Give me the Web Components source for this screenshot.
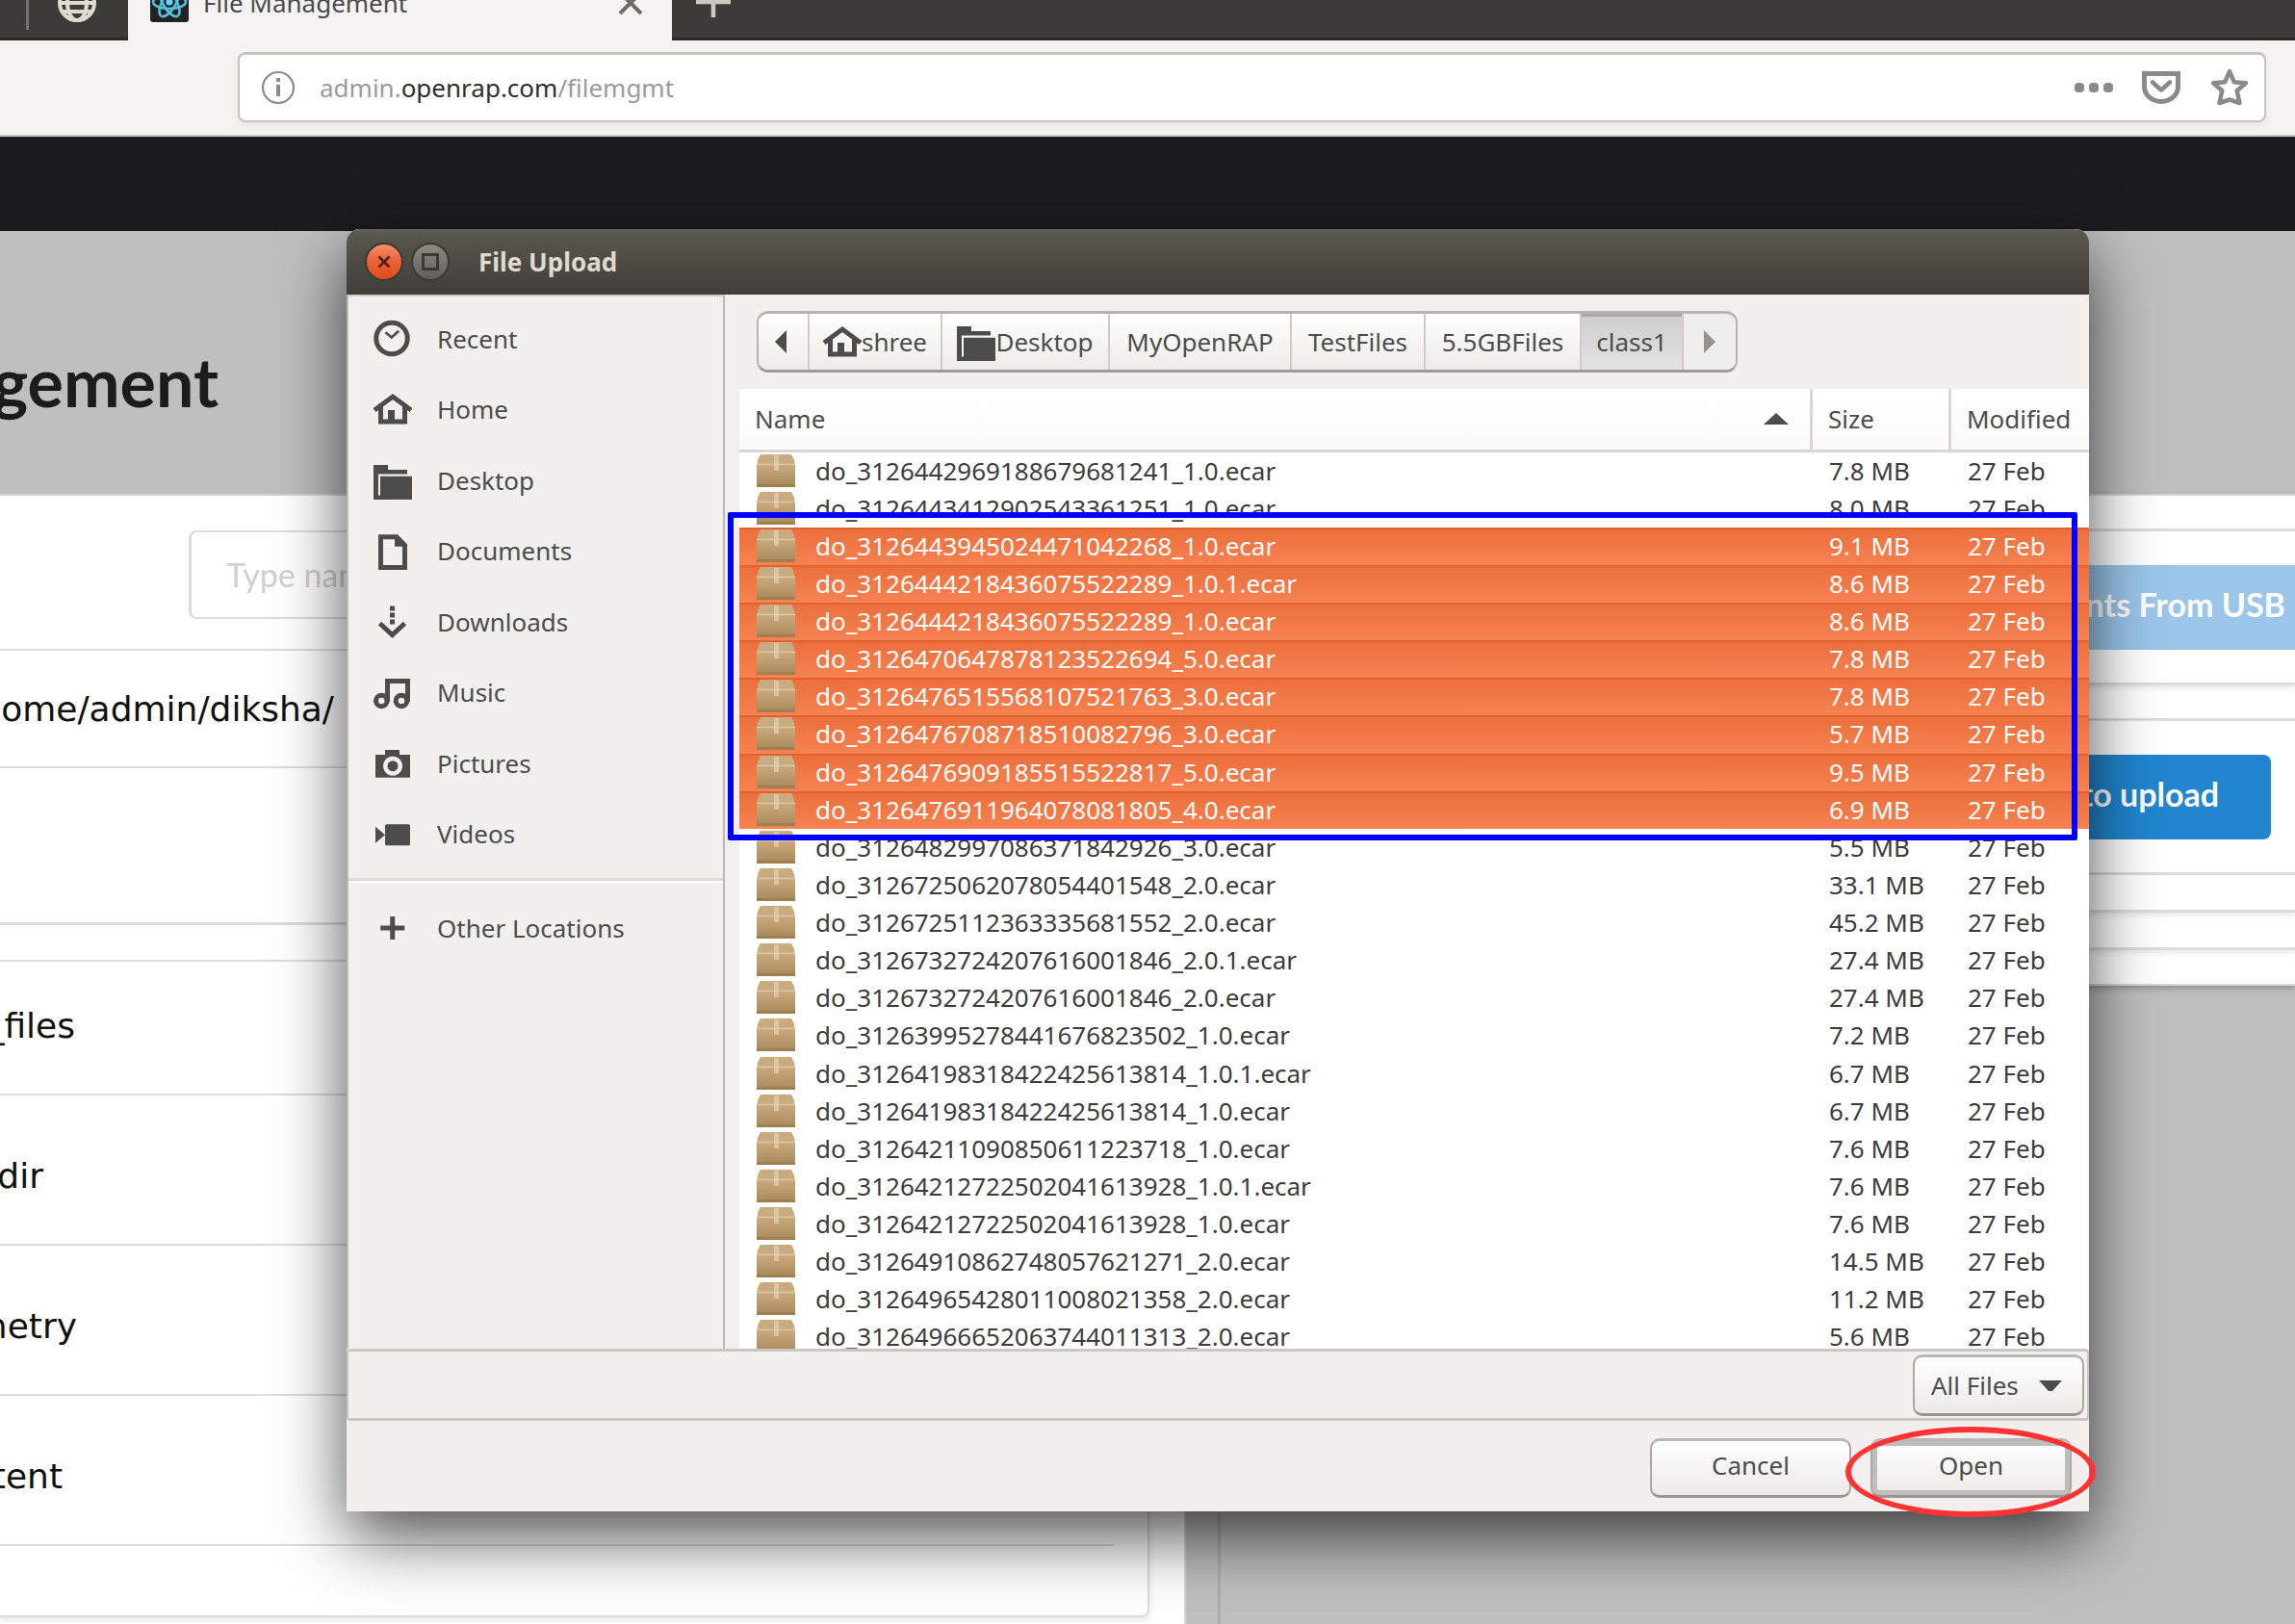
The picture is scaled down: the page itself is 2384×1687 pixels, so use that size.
<!DOCTYPE html>
<html lang="en">
<head>
<meta charset="utf-8">
<title>File Management</title>
<style>
  html, body { margin: 0; height: 100%; overflow: hidden; }
  body { font-family: "Noto Sans", "Open Sans", sans-serif; font-size: 26px; background: #bfbfbf; }
</style>
</head>
<body>
<desktop-screen>
  <browser-tabs slot="chrome"></browser-tabs>
  <browser-bar slot="chrome"></browser-bar>
  <admin-page slot="page"></admin-page>
  <file-dialog slot="window" heading="File Upload"></file-dialog>
</desktop-screen>

<script>
const make = (name, html, ready) => customElements.define(name, class extends HTMLElement {
  constructor() {
    super();
    this.attachShadow({ mode: "open" });
  }
  connectedCallback() {
    this.shadowRoot.innerHTML = typeof html === "function" ? html(this) : html;
    if (ready) ready(this);
  }
});

/* Symbolic icons on a 16 unit grid */
const ICONS = {
  recent: '<circle cx="7.6" cy="7.8" r="6.5" fill="none" stroke="currentColor" stroke-width="2"/><path d="M5 5.3L7.5 7.4L10.5 4.7" fill="none" stroke="currentColor" stroke-width="1.1"/>',
  home: '<path d="M.4 8.4L8 2.8L15.6 8.4M3 7V13.2H13V7" fill="none" stroke="currentColor" stroke-width="2"/><path d="M6 8.4H8.8V13H6z"/>',
  folder: '<path d="M0 1.6H6V3.6H14V5.4H2V14.2H2.8V6.3H16V16H0z"/>',
  document: '<path d="M3 2.3H9.6L13 5.7V15H3z" fill="none" stroke="currentColor" stroke-width="2"/><path d="M8.8 2V6.3H13.4z"/>',
  download: '<path d="M6.8 1.4h2v2h-2zM6.8 4.2h2v2h-2zM6.8 7h2v2h-2z"/><path d="M2.6 8.6L7.8 13.4L13 8.6" fill="none" stroke="currentColor" stroke-width="2"/>',
  music: '<g fill="none" stroke="currentColor" stroke-width="2"><circle cx="3.3" cy="11.6" r="2.3"/><circle cx="11.6" cy="11.6" r="2.3"/><path d="M5.8 12V3.4H14.2V12"/></g>',
  camera: '<path fill-rule="evenodd" d="M.8 4.4H4.8V2.4H10.8V4.4H15.2V13.9H.8zM8 5.1a4 4 0 1 0 .01 0z"/><circle cx="8" cy="9.1" r="2.2"/>',
  video: '<rect x="4.8" y="4.1" width="10.4" height="8.8" rx=".6"/><path d="M.8 5.1L4.8 8.5L.8 11.9z"/>',
  plus: '<path d="M6.9 3.2h2v3.8h4v2h-4v3.8h-2V9H2.9V7h4z"/>'
};
make("sym-icon", el => `
  <style>
    :host { display: block; width: 40px; height: 40px; flex: none; }
    svg { display: block; width: 100%; height: 100%; fill: currentColor; }
  </style>
  <svg viewBox="0 0 16 16" aria-hidden="true">${ICONS[el.getAttribute("name")]}</svg>`);

make("desktop-screen", `
  <style>
    :host { display: flex; flex-direction: column; height: 100vh; overflow: hidden; position: relative; }
    slot[name=page]::slotted(*) { flex: 1; min-height: 0; }
  </style>
  <slot name="chrome"></slot><slot name="page"></slot><slot name="window"></slot>`);

make("browser-tabs", `
  <style>
    :host { display: flex; align-items: flex-end; height: 42px; overflow: hidden; background: #3c3b37; box-shadow: inset 0 -3px #2a2925; }
    .pin, .tab, .new { height: 78px; display: flex; align-items: center; box-sizing: border-box; flex: none; }
    .pin { width: 133px; padding-left: 27px; gap: 29px; }
    .pin i { width: 3px; height: 56px; background: #75736d; }
    .tab { width: 565px; background: #f4f3f2; padding: 0 30px 0 23px; color: #4a4a4a; }
    .tab span { margin-left: 15px; flex: 1; }
    button { border: 0; background: none; padding: 0; display: block; line-height: 0; color: #6e6b68; }
    .new { padding-left: 25px; }
    svg { display: block; flex: none; }
  </style>
  <div class="pin"><i></i>
    <svg width="42" height="42" viewBox="0 0 42 42" fill="none" stroke="#dfdbd2" stroke-width="4"><circle cx="21" cy="21" r="18"/><ellipse cx="21" cy="21" rx="10" ry="18"/><path d="M3 21h36M6 30h30M6 12h30"/></svg>
  </div>
  <div class="tab">
    <svg width="40" height="40" viewBox="0 0 40 40"><rect width="40" height="40" rx="3" fill="#222"/><g fill="none" stroke="#53c1de" stroke-width="2.6"><ellipse cx="20" cy="19" rx="17" ry="7"/><ellipse cx="20" cy="19" rx="17" ry="7" transform="rotate(60 20 19)"/><ellipse cx="20" cy="19" rx="17" ry="7" transform="rotate(120 20 19)"/></g><circle cx="20" cy="19" r="3.5" fill="#61dafb"/></svg>
    <span>File Management</span>
    <button aria-label="Close tab"><svg width="26" height="26" viewBox="0 0 26 26" stroke="currentColor" stroke-width="4"><path d="M2 2L24 24M24 2L2 24"/></svg></button>
  </div>
  <div class="new"><button aria-label="New tab"><svg width="36" height="36" viewBox="0 0 36 36" stroke="#cfc9c4" stroke-width="4.5"><path d="M18 0V33M0 17H36"/></svg></button></div>`);

make("browser-bar", `
  <style>
    :host { display: block; height: 100px; box-sizing: border-box; padding: 12px 30px 0 247px; background: #f4f3f2; border-bottom: 2px solid #c8c6c3; }
    .url { display: flex; align-items: center; height: 73px; box-sizing: border-box; border: 2px solid #c6c3c0; border-top-width: 3px; border-radius: 8px; background: #fff; padding: 0 15px 0 22px; box-shadow: 0 3px 8px rgba(0,0,0,.05); color: #8a8a8a; }
    .text { flex: 1; margin-left: 25px; color: #9b9b9b; }
    b { font-weight: 400; color: #2e2e2e; }
    button { border: 0; background: none; padding: 0; margin-left: 30px; display: block; color: #8a8a8a; }
    svg { display: block; }
  </style>
  <div class="url">
    <svg width="36" height="36" viewBox="0 0 36 36"><circle cx="18" cy="18" r="16" fill="none" stroke="currentColor" stroke-width="2.2"/><path d="M16 8h4v4h-4zM16 15h4v12h-4z" fill="currentColor"/></svg>
    <div class="text">admin.<b>openrap.com</b>/filemgmt</div>
    <button aria-label="Page actions"><svg width="40" height="40" viewBox="0 0 40 40" fill="currentColor"><rect y="15" width="10" height="10" rx="4"/><rect x="15" y="15" width="10" height="10" rx="4"/><rect x="30" y="15" width="10" height="10" rx="4"/></svg></button>
    <button aria-label="Save to Pocket"><svg width="40" height="40" viewBox="0 0 40 40" fill="none" stroke="currentColor"><path d="M2.5 5.5H37.5V19a17.5 15.5 0 0 1-35 0z" stroke-width="5"/><path d="M11 14.5L20 22.5L29 14.5" stroke-width="4.5" stroke-linecap="round" stroke-linejoin="round"/></svg></button>
    <button aria-label="Bookmark this page"><svg width="42" height="42" viewBox="0 0 42 42" fill="none" stroke="currentColor" stroke-width="4.5" stroke-linejoin="round"><path d="M21 4L25.7 15.2L38 16.2L28.7 24.2L31.5 37L21 33.5L10.500 37L13.3 24.2L4 16.2L16.3 15.2Z"/></svg></button>
  </div>`);

make("admin-page", `
  <style>
    :host { display: block; background: #bfbfbf; overflow: hidden; }
    header { height: 98px; background: #1b1c1d; }
    main { display: grid; grid-template-columns: minmax(0, 1232fr) minmax(0, 1152fr); height: 1448px; }
    .left { display: flex; flex-direction: column; }
    h1 { margin: 0; width: 227px; height: 273px; padding-top: 116px; box-sizing: border-box; display: flex; justify-content: flex-end; font: 700 70px/80px Lato, sans-serif; color: #1c1c1c; white-space: nowrap; }
    .card { flex: 1; background: #fff; border: solid #d6d6d6; border-width: 2px 2px 0 0; padding-right: 36px; }
    .pane { border: solid #dcdcdc; border-width: 0 2px 2px 0; border-radius: 0 0 8px 0; box-shadow: 0 3px 6px rgba(34,36,38,.12); }
    .find { height: 161px; box-sizing: border-box; padding: 36px 0 0 196px; border-bottom: 2px solid #dcdcdc; }
    input { width: 520px; height: 92px; box-sizing: border-box; border: 2px solid #dcdcdc; border-left-width: 3px; border-radius: 8px; padding: 0 36px 2px; font: 34px Lato, sans-serif; background: #fff; }
    input::placeholder { color: #d0d0d0; opacity: 1; }
    .gap { height: 160px; border-bottom: 3px solid #dcdcdc; }
    .gap.thin { height: 36px; border-bottom-width: 2px; }
    ul { margin: 0 35px 0 0; padding: 0; list-style: none; }
    .tail { height: 72px; }
    .right { margin-left: 33px; border-left: 3px solid #adadad; }
    .stack { margin: 273px 0 0 33px; background: #fff; border: solid #d6d6d6; border-width: 2px 0; box-shadow: 0 3px 6px rgba(34,36,38,.3); }
    .stack > div { box-sizing: border-box; display: flex; justify-content: flex-end; align-items: flex-start; border-bottom: 3px solid #dcdcdc; }
    .stack > .low { height: 37px; }
    .stack > .mid { height: 39px; }
    .stack > .tall { height: 160px; padding-top: 35px; }
    .stack > .fade { box-shadow: 0 3px 5px rgba(34,36,38,.1); }
    .stack > div:last-child { border: 0; height: 35px; }
    button { height: 88px; border: 0; color: #fff; background: #2185d0; font: 700 34px Lato, sans-serif; display: flex; align-items: center; justify-content: flex-end; width: 600px; white-space: nowrap; }
    .usb { background: #9bc6ea; padding: 0 10px 7px; }
    .up { margin-right: 25px; border-radius: 8px; padding: 0 54px 7px; }
  </style>
  <header></header>
  <main>
    <section class="left">
      <h1>gement</h1>
      <div class="card"><div class="pane">
        <div class="find"><input placeholder="Type name" aria-label="File name"></div>
        <dir-row end="347" tall="122" rise="41">ome/admin/diksha/</dir-row>
        <div class="gap"></div>
        <div class="gap thin"></div>
        <ul>
          <dir-row end="78" tall="139" rise="52">_files</dir-row>
          <dir-row end="45" tall="156" rise="52">dir</dir-row>
          <dir-row end="80" tall="156" rise="52">metry</dir-row>
          <dir-row end="65" tall="156" rise="52">tent</dir-row>
        </ul>
        <div class="tail"></div>
      </div></div>
    </section>
    <section class="right">
      <div class="stack">
        <div class="low"></div>
        <div class="tall fade"><button class="usb">nts From USB</button></div>
        <div class="low"></div>
        <div class="tall"><button class="up">to upload</button></div>
        <div class="mid fade"></div>
        <div class="mid fade"></div>
        <div></div>
      </div>
    </section>
  </main>`);

make("dir-row", el => `
  <style>
    :host { display: flex; align-items: flex-end; justify-content: flex-end; width: ${el.getAttribute("end")}px; height: ${el.getAttribute("tall")}px; position: relative; box-sizing: border-box; padding-bottom: ${el.getAttribute("rise")}px; font: 36px "DejaVu Sans", sans-serif; color: #111; white-space: nowrap; }
    hr { position: absolute; left: 0; bottom: 0; width: 1157px; margin: 0; border: 0; border-top: 2px solid #dcdcdc; }
  </style>
  <slot></slot><hr>`);

make("side-place", el => `
  <style>
    :host { display: block; }
    a { display: flex; align-items: center; gap: 26px; height: 100%; padding-left: 26px; color: #4c4c4c; text-decoration: none; }
  </style>
  <a href="#"><sym-icon name="${el.getAttribute("icon")}"></sym-icon><slot></slot></a>`);

make("path-step", el => {
  const icon = el.getAttribute("icon");
  return `
  <style>
    :host { display: block; border-right: 2px solid #cfcbc7; box-sizing: border-box; }
    :host(:last-child) { border-right: 0; }
    button { width: 100%; height: 100%; border: 0; padding: 0; display: flex; align-items: center; justify-content: center; font: inherit; color: #4c4c4c; background: linear-gradient(#fff, #ecebe9); white-space: nowrap; }
    :host([current]) button { background: linear-gradient(#cdcdcd, #e3e3e3); box-shadow: inset 0 3px #a8a8a8; }
    :host([dim]) button { background: #eeeeed; color: #96938e; }
  </style>
  <button>${icon ? `<sym-icon name="${icon}"></sym-icon>` : ""}<slot></slot></button>`;
});

const FILES = `3126442969188679681241_1.0|7.8
3126443412902543361251_1.0|8.0
3126443945024471042268_1.0|9.1
3126444218436075522289_1.0.1|8.6
3126444218436075522289_1.0|8.6
3126470647878123522694_5.0|7.8
3126476515568107521763_3.0|7.8
3126476708718510082796_3.0|5.7
3126476909185515522817_5.0|9.5
3126476911964078081805_4.0|6.9
3126482997086371842926_3.0|5.5
3126725062078054401548_2.0|33.1
3126725112363335681552_2.0|45.2
3126732724207616001846_2.0.1|27.4
3126732724207616001846_2.0|27.4
31263995278441676823502_1.0|7.2
31264198318422425613814_1.0.1|6.7
31264198318422425613814_1.0|6.7
31264211090850611223718_1.0|7.6
31264212722502041613928_1.0.1|7.6
31264212722502041613928_1.0|7.6
31264910862748057621271_2.0|14.5
31264965428011008021358_2.0|11.2
31264966652063744011313_2.0|5.6`.split("\n").map(line => line.split("|"));

const BOX = `<svg width="40" height="34" viewBox="0 0 40 34" aria-hidden="true"><path d="M4 1H36L38 4L40 11V33H0V11L2 4z" fill="url(#kraft)"/><path d="M4 0H36L39 6V10H1V6z" fill="#c9ab80"/><path d="M0 10.5H40" stroke="#dcc6a6" stroke-width="1.6"/><path d="M0 31H40V34H0z" fill="#9f7f52"/><path d="M18 1h5v16h-5z" fill="#e6d8c2" opacity=".6"/></svg>`;

make("file-list", `
  <style>
    :host { display: block; background: #fff; overflow: hidden; color: #3c3c3c; }
    table { width: 100%; table-layout: fixed; border-collapse: separate; border-spacing: 0; }
    th:nth-child(1) { width: auto; }
    th:nth-child(2) { width: 144px; }
    th:nth-child(3) { width: 143px; }
    th { padding: 0; height: 66px; font-weight: 400; }
    th button { width: 100%; height: 66px; box-sizing: border-box; display: flex; align-items: center; justify-content: space-between; border: solid #d9d7d4; border-width: 0 3px 3px 0; padding: 0 21px 1px 16px; font: inherit; color: #4c4c4c; background: linear-gradient(#fff, #fafaf9); white-space: nowrap; }
    th:last-child button { border-right-width: 0; padding-right: 0; }
    td { padding: 0 0 0 17px; height: 39px; line-height: 38px; white-space: nowrap; vertical-align: top; }
    tbody tr:nth-child(8n) td { height: 40px; }
    .name { display: flex; align-items: center; gap: 21px; padding-left: 1px; }
    .on td { background: linear-gradient(#e0622f 2px, #eb6f3c 2px, #f78252); color: #fff; }
    svg { display: block; flex: none; }
  </style>
  <svg width="0" height="0" style="position:absolute"><linearGradient id="kraft" x1="0" y1="0" x2="0" y2="1"><stop offset="0" stop-color="#c9a97b"/><stop offset=".4" stop-color="#c6a678"/><stop offset="1" stop-color="#a98a5d"/></linearGradient></svg>
  <table>
    <thead><tr>
      <th><button>Name<svg width="28" height="14" viewBox="0 0 28 14"><path d="M14 1L27 13H1z" fill="#4c4c4c"/></svg></button></th>
      <th><button>Size</button></th>
      <th><button>Modified</button></th>
    </tr></thead>
    <tbody></tbody>
  </table>`, el => {
    el.shadowRoot.querySelector("tbody").innerHTML = FILES.map(([id, size], i) =>
      `<tr class="${i > 1 && i < 10 ? "on" : ""}"><td><div class="name">${BOX}<span>do_${id}.ecar</span></div></td><td>${size} MB</td><td>27 Feb</td></tr>`).join("");
  });

make("push-button", `
  <style>
    :host { display: block; width: 209px; height: 62px; }
    button { width: 100%; height: 100%; box-sizing: border-box; border: 2px solid #aaa9a7; border-top: 3px solid #b9b8b6; border-bottom: 3px solid #979694; border-radius: 10px; padding: 0 0 6px; font: inherit; color: #4c4c4c; background: linear-gradient(#fff, #ebeae8); }
    :host([primary]) button { box-shadow: inset 0 0 0 5px #bdbdbc; }
  </style>
  <button><slot></slot></button>`);

make("file-dialog", el => `
  <style>
    :host { position: absolute; top: 238px; left: 360px; right: 214px; height: 1332px; display: flex; flex-direction: column; background: #f1f0ee; border-radius: 14px 14px 0 0; box-shadow: 0 26px 70px rgba(0,0,0,.7); color: #4c4c4c; }
    .bar { height: 68px; flex: none; display: flex; align-items: center; gap: 8px; padding-left: 19px; border-radius: 14px 14px 0 0; background: linear-gradient(#67645a, #5a574e 4px, #3f3e39); color: #dfdbd2; font-weight: 700; }
    .bar button { width: 40px; height: 40px; border: 0; padding: 0; background: none; }
    .bar svg { display: block; }
    .bar span { margin-left: 22px; }
    .mid { flex: 1; min-height: 0; display: flex; }
    nav { width: 393px; box-sizing: border-box; flex: none; border: 2px solid #bcb8b2; border-top-color: #cfccc8; border-bottom: 0; }
    .places { display: grid; grid-template-rows: repeat(8, 1fr); height: 588px; padding-top: 7px; }
    .rule { margin-top: 9px; height: 3px; background: #dcdbd8; border-bottom: 2px solid #fbfbfa; }
    .other { height: 72px; padding-top: 11px; }
    .pane { flex: 1; min-width: 0; display: flex; flex-direction: column; padding-left: 15px; }
    .path { display: grid; grid-template-columns: 53px 138px 174px 189px 139px 162px 106px 54px; height: 64px; box-sizing: border-box; border: 2px solid #b5b4b2; border-top-width: 3px; border-bottom: 3px solid #9b9a98; border-radius: 12px; overflow: hidden; align-self: flex-start; margin: 17px 0 17px 18px; }
    file-list { flex: 1; min-height: 0; }
    .filter { height: 75px; flex: none; box-sizing: border-box; border: 2px solid #c9c6c3; border-top-width: 3px; border-bottom-width: 3px; border-radius: 4px; display: flex; justify-content: flex-end; padding: 3px 3px 0; }
    .pick { position: relative; width: 178px; height: 64px; }
    select { appearance: none; width: 100%; height: 100%; box-sizing: border-box; border: 2px solid #aaa9a7; border-top: 3px solid #b9b8b6; border-bottom: 3px solid #979694; border-radius: 10px; padding: 0 0 0 17px; font: inherit; color: #4c4c4c; background: linear-gradient(#fff, #ebeae8); }
    .pick svg { position: absolute; right: 23px; top: 27px; pointer-events: none; }
    .actions { height: 94px; flex: none; box-sizing: border-box; display: flex; justify-content: flex-end; gap: 20px; padding: 18px 18px 0; }
    .mark { position: absolute; box-sizing: border-box; pointer-events: none; }
    .blue { left: 396px; right: 12px; top: 294px; height: 341px; border: 6px solid #00f; border-radius: 2px; }
    .red { right: -7px; bottom: -6px; width: 260px; height: 94px; border: 6px solid #f33; border-radius: 50%; }
  </style>
  <div class="bar">
    <button aria-label="Close"><svg width="40" height="40" viewBox="0 0 40 40"><defs><linearGradient id="r" x1="0" y1="0" x2="0" y2="1"><stop offset="0" stop-color="#f7906f"/><stop offset=".5" stop-color="#ea6036"/><stop offset="1" stop-color="#df4a16"/></linearGradient></defs><circle cx="20" cy="20" r="19" fill="url(#r)" stroke="#3b3933" stroke-width="2"/><path d="M14.5 14.5L25.5 25.5M25.5 14.5L14.5 25.5" stroke="#4a2314" stroke-width="2.6"/></svg></button>
    <button aria-label="Maximize"><svg width="40" height="40" viewBox="0 0 40 40"><defs><linearGradient id="g" x1="0" y1="0" x2="0" y2="1"><stop offset="0" stop-color="#8e8c85"/><stop offset="1" stop-color="#5f5d57"/></linearGradient></defs><circle cx="20" cy="20" r="19" fill="url(#g)" stroke="#3b3933" stroke-width="2"/><path d="M12.5 12.5H27.5V27.5H12.5z" fill="none" stroke="#3b3933" stroke-width="3"/></svg></button>
    <span>${el.getAttribute("heading")}</span>
  </div>
  <div class="mid">
    <nav aria-label="Places">
      <div class="places">
        <side-place icon="recent">Recent</side-place>
        <side-place icon="home">Home</side-place>
        <side-place icon="folder">Desktop</side-place>
        <side-place icon="document">Documents</side-place>
        <side-place icon="download">Downloads</side-place>
        <side-place icon="music">Music</side-place>
        <side-place icon="camera">Pictures</side-place>
        <side-place icon="video">Videos</side-place>
      </div>
      <div class="rule"></div>
      <side-place class="other" icon="plus">Other Locations</side-place>
    </nav>
    <div class="pane">
      <div class="path">
        <path-step><svg width="20" height="24" viewBox="0 0 20 24"><path d="M13 0V24L1 12z" fill="#4c4c4c"/></svg></path-step>
        <path-step icon="home">shree</path-step>
        <path-step icon="folder">Desktop</path-step>
        <path-step>MyOpenRAP</path-step>
        <path-step>TestFiles</path-step>
        <path-step>5.5GBFiles</path-step>
        <path-step current>class1</path-step>
        <path-step dim><svg width="14" height="24" viewBox="0 0 14 24"><path d="M1 0V24L13 12z" fill="#96938e"/></svg></path-step>
      </div>
      <file-list></file-list>
    </div>
  </div>
  <div class="filter"><div class="pick">
    <select aria-label="File type"><option>All Files</option></select>
    <svg width="24" height="12" viewBox="0 0 24 12"><path d="M0 0H24L14 11H10z" fill="#4c4c4c"/></svg>
  </div></div>
  <div class="actions">
    <push-button>Cancel</push-button>
    <push-button primary>Open</push-button>
  </div>
  <div class="mark blue"></div>
  <div class="mark red"></div>`);
</script>
</body>
</html>
